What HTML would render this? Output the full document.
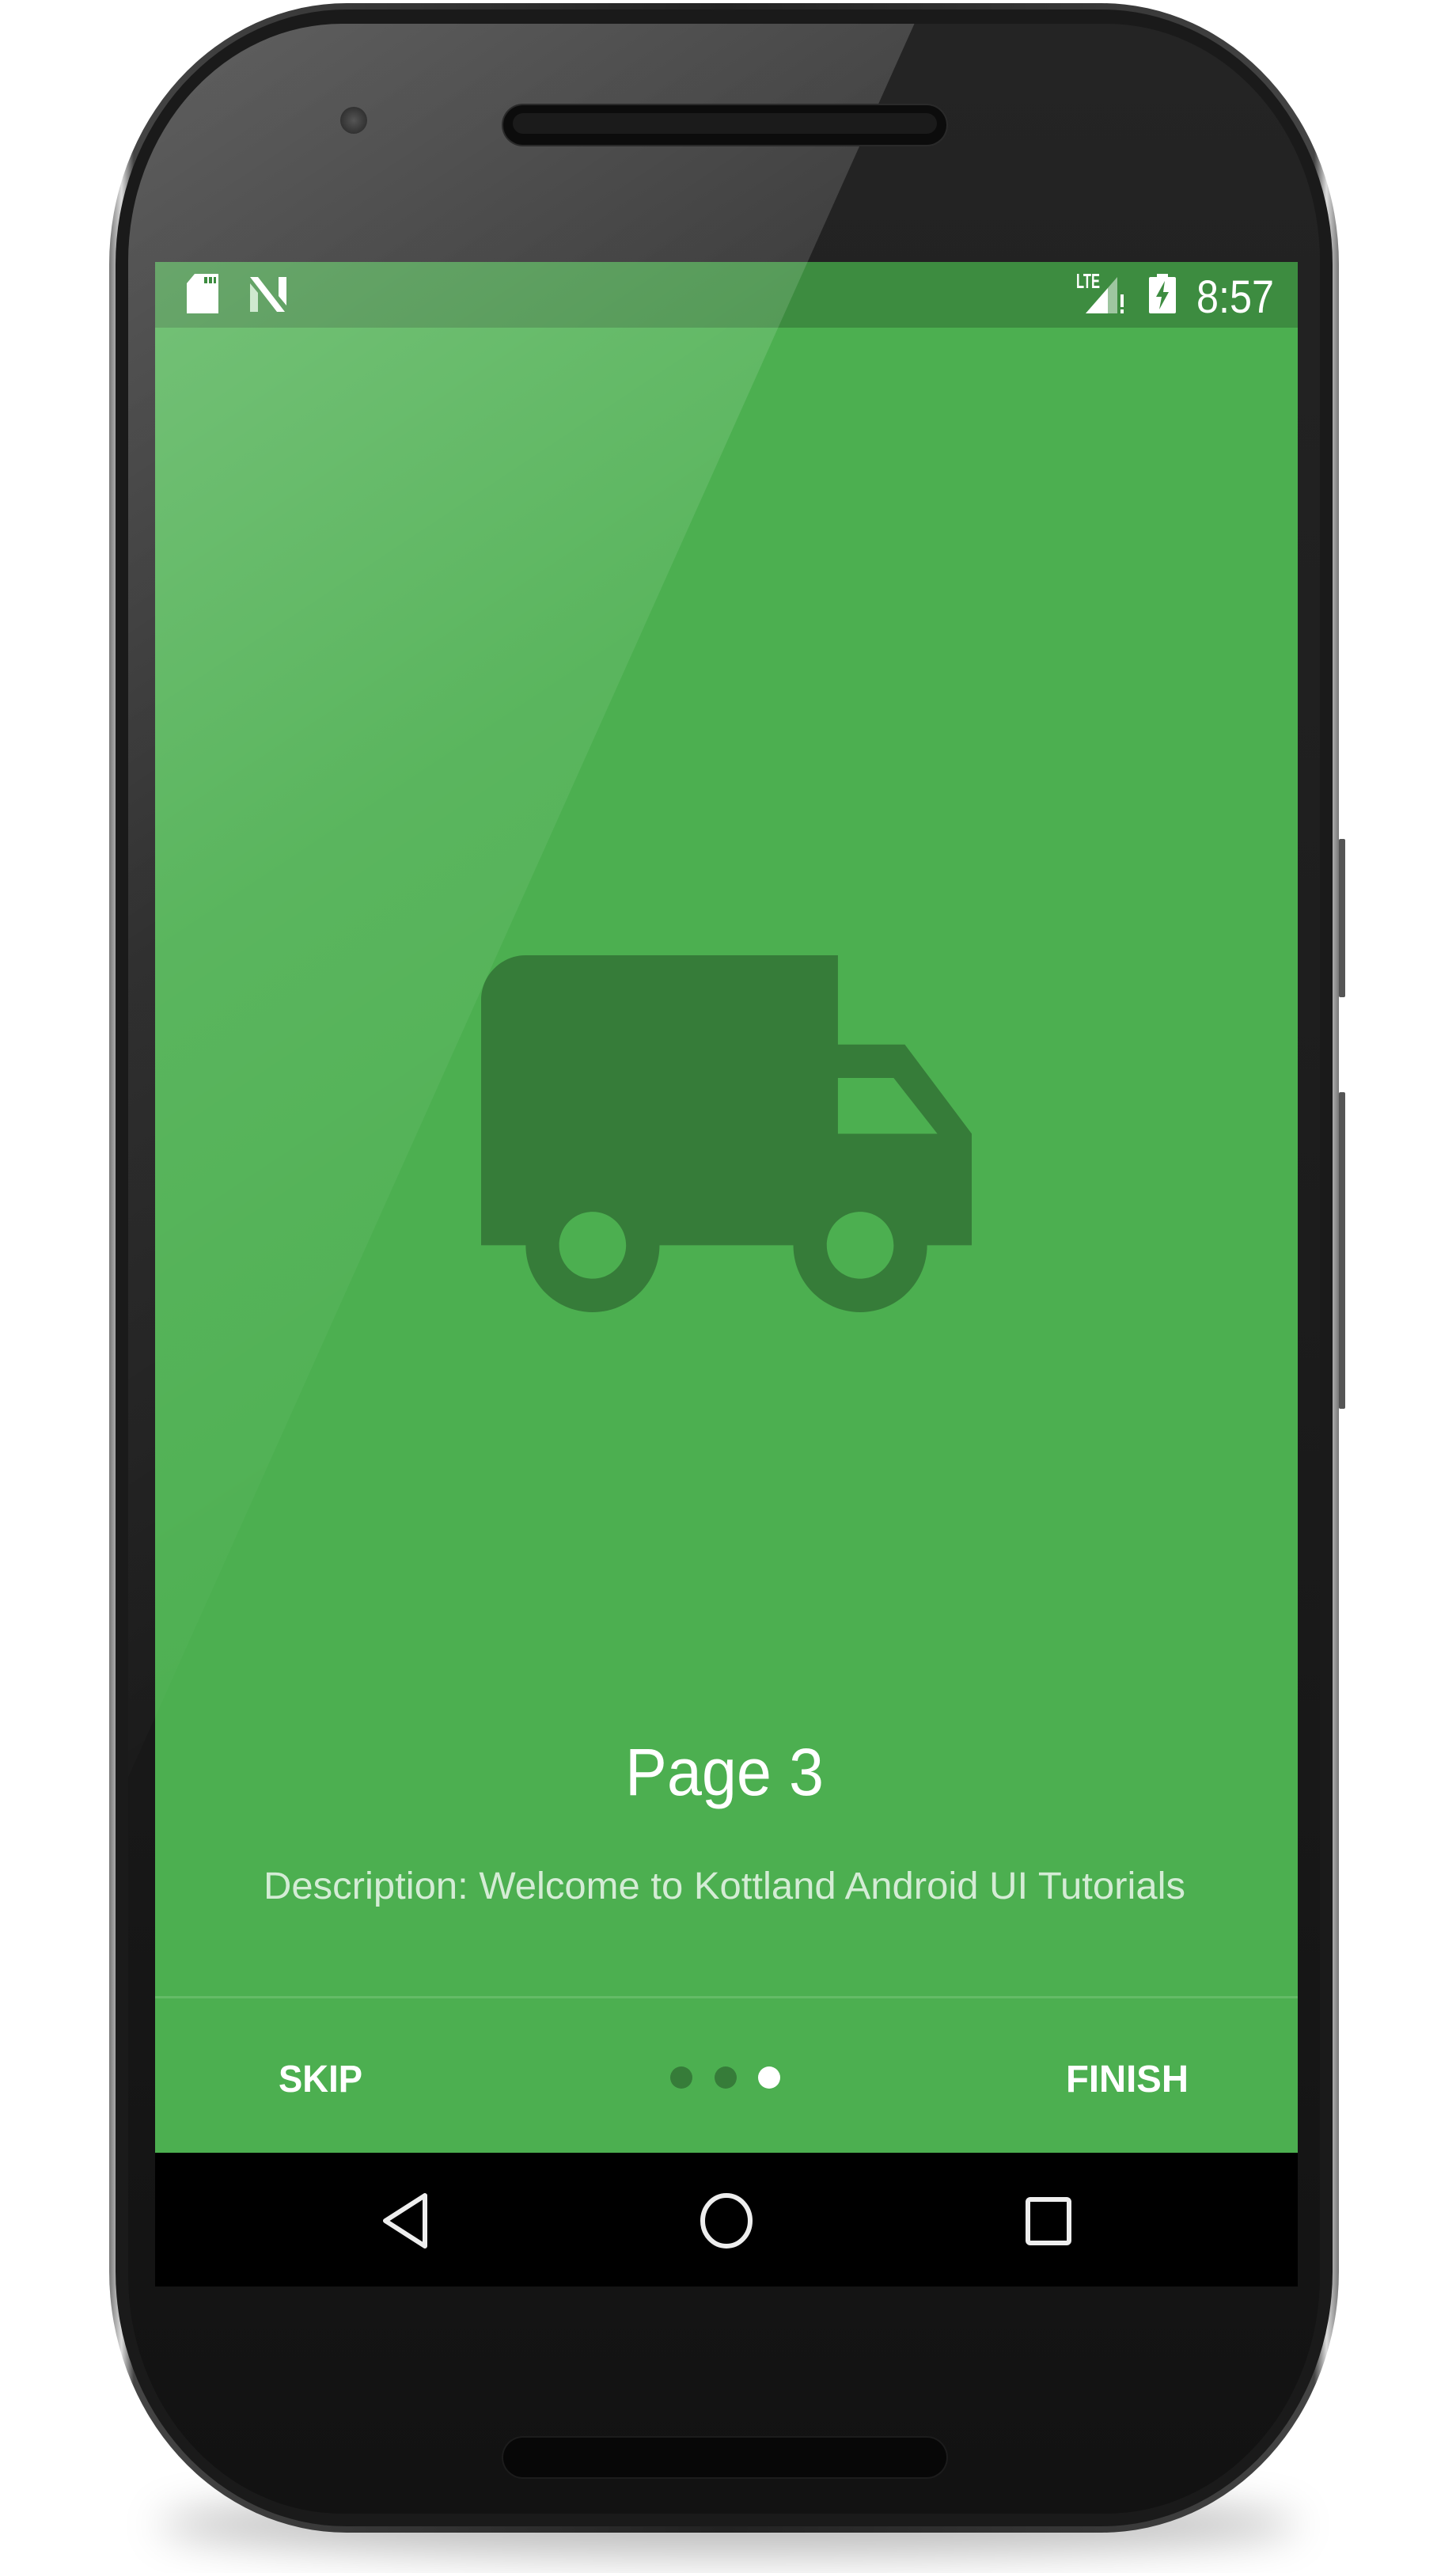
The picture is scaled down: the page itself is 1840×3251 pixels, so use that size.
<!DOCTYPE html>
<html><head><meta charset="utf-8"><style>
html,body{margin:0;padding:0;background:#fff;}
body{width:1840px;height:3251px;position:relative;overflow:hidden;font-family:"Liberation Sans",sans-serif;}
.abs{position:absolute;}
</style></head><body>
<div class="abs" style="left:200px;top:3150px;width:1440px;height:80px;border-radius:50%;background:rgba(0,0,0,0.25);filter:blur(25px);"></div>
<div class="abs" style="left:138px;top:4px;width:1554px;height:3196px;border-radius:300px/330px;background:linear-gradient(90deg,#777,#ddd 1%,#444 2%,#222 50%,#444 98%,#ddd 99%,#777);"></div>
<div class="abs" style="left:146px;top:12px;width:1538px;height:3180px;border-radius:292px/322px;background:#1a1a1a;"></div>
<div class="abs" style="left:162px;top:30px;width:1506px;height:3146px;border-radius:270px/300px;background:linear-gradient(180deg,#242424 0%,#1c1c1c 50%,#121212 100%);"></div>
<div class="abs" style="left:1692px;top:1060px;width:8px;height:200px;background:#555;border-radius:2px;"></div>
<div class="abs" style="left:1692px;top:1380px;width:8px;height:400px;background:#555;border-radius:2px;"></div>
<div class="abs" style="left:196px;top:331px;width:1444px;height:2390px;background:#4caf50;"></div>
<div class="abs" style="left:196px;top:331px;width:1444px;height:83px;background:#3d8c40;"></div>
<div class="abs" style="left:196px;top:2720px;width:1444px;height:169px;background:#000;"></div>
<svg class="abs" style="left:0;top:0" width="1840" height="3251">
<defs>
<linearGradient id="g" x1="0" y1="0" x2="0.3" y2="1"><stop offset="0" stop-color="#fff" stop-opacity="0.28"/><stop offset="0.5" stop-color="#fff" stop-opacity="0.08"/><stop offset="1" stop-color="#fff" stop-opacity="0"/></linearGradient>
<clipPath id="c"><rect x="162" y="30" width="1506" height="3146" rx="270" ry="300"/></clipPath>
</defs>
<path clip-path="url(#c)" d="M150 20 L1160 20 L160 2250 L150 2250 Z" fill="url(#g)"/>
</svg>
<div class="abs" style="left:636px;top:133px;width:560px;height:50px;border-radius:25px;background:#0c0c0c;box-shadow:0 0 0 2px #2a2a2a;"></div>
<div class="abs" style="left:648px;top:143px;width:536px;height:26px;border-radius:13px;background:#1b1b1b;"></div>
<div class="abs" style="left:636px;top:3080px;width:560px;height:50px;border-radius:25px;background:#070707;box-shadow:0 0 0 2px #1c1c1c;"></div>
<div class="abs" style="left:430px;top:135px;width:34px;height:34px;border-radius:50%;background:radial-gradient(#555,#222);"></div>
<svg class="abs" style="left:236px;top:346px" width="44" height="50"><path d="M10 0H40V50H0V12Z" fill="#fff"/><rect x="22" y="4" width="4" height="8" fill="#3d8c40"/><rect x="28" y="4" width="4" height="8" fill="#3d8c40"/><rect x="34" y="4" width="3" height="8" fill="#3d8c40"/></svg>
<svg class="abs" style="left:316px;top:350px" width="54" height="44"><path d="M0 0H10L44 44H34Z" fill="#fff"/><path d="M0 8L10 20V44H0Z" fill="#cfe9cf"/><path d="M36 0H46V36L36 24Z" fill="#fff"/></svg>
<svg class="abs" style="left:0;top:331px" width="1840" height="83">
<text x="1360" y="33" font-family="Liberation Sans, sans-serif" font-size="26" font-weight="bold" fill="#fff" textLength="30" lengthAdjust="spacingAndGlyphs">LTE</text>
<text x="1512" y="64" font-family="Liberation Sans, sans-serif" font-size="58" fill="#fff" textLength="98" lengthAdjust="spacingAndGlyphs">8:57</text>
</svg>
<svg class="abs" style="left:1372px;top:350px" width="52" height="46"><path d="M40 0V46H0Z" fill="rgba(255,255,255,0.5)"/><path d="M28 14V46H0Z" fill="#fff"/><rect x="44" y="22" width="4" height="16" fill="#fff"/><rect x="44" y="41" width="4" height="5" fill="#fff"/></svg>
<svg class="abs" style="left:1452px;top:346px" width="34" height="50"><rect x="10" y="0" width="14" height="5" fill="#fff"/><rect x="0" y="4" width="34" height="46" rx="2" fill="#fff"/><path d="M20 9L9 29H16L13 45L25 23H18Z" fill="#3d8c40"/></svg>
<svg class="abs" style="left:608px;top:1207px" width="620" height="451" viewBox="1 4 22 16"><path fill="#367c39" d="M20 8h-3V4H3c-1.1 0-2 .9-2 2v11h2c0 1.66 1.34 3 3 3s3-1.34 3-3h6c0 1.660 1.34 3 3 3s3-1.34 3-3h2v-5l-3-4zM6 18.5c-.83 0-1.5-.67-1.5-1.5s.67-1.5 1.5-1.5 1.5.67 1.5 1.5-.67 1.5-1.5 1.5zm13.5-9l1.96 2.5H17V9.5h2.5zm-1.5 9c-.83 0-1.5-.67-1.5-1.5s.67-1.5 1.5-1.5 1.5.67 1.5 1.5-.67 1.5-1.5 1.5z"/></svg>
<svg class="abs" style="left:0;top:2150px" width="1840" height="300">
<text x="790" y="118" font-family="Liberation Sans, sans-serif" font-size="84" fill="#fff" textLength="251" lengthAdjust="spacingAndGlyphs">Page 3</text>
<text x="333" y="249" font-family="Liberation Sans, sans-serif" font-size="48" fill="#d4ecd5" textLength="1165" lengthAdjust="spacingAndGlyphs">Description: Welcome to Kottland Android UI Tutorials</text>
</svg>
<div class="abs" style="left:196px;top:2522px;width:1444px;height:3px;background:#64bb67;"></div>
<svg class="abs" style="left:0;top:2580px" width="1840" height="90">
<text x="352" y="63" font-family="Liberation Sans, sans-serif" font-size="48" font-weight="bold" fill="#fff" textLength="106" lengthAdjust="spacingAndGlyphs">SKIP</text>
<text x="1347" y="63" font-family="Liberation Sans, sans-serif" font-size="48" font-weight="bold" fill="#fff" textLength="155" lengthAdjust="spacingAndGlyphs">FINISH</text>
<circle cx="861" cy="45" r="14" fill="#367c39"/>
<circle cx="917" cy="45" r="14" fill="#367c39"/>
<circle cx="972" cy="45" r="14" fill="#fff"/>
</svg>
<svg class="abs" style="left:0;top:2720px" width="1840" height="169">
<path d="M537 54V118L487 86Z" fill="none" stroke="#eee" stroke-width="6" stroke-linejoin="round"/>
<ellipse cx="918" cy="86" rx="30" ry="32" fill="none" stroke="#eee" stroke-width="6"/>
<rect x="1299" y="59" width="52" height="55" rx="3" fill="none" stroke="#eee" stroke-width="6"/>
</svg>
</body></html>
